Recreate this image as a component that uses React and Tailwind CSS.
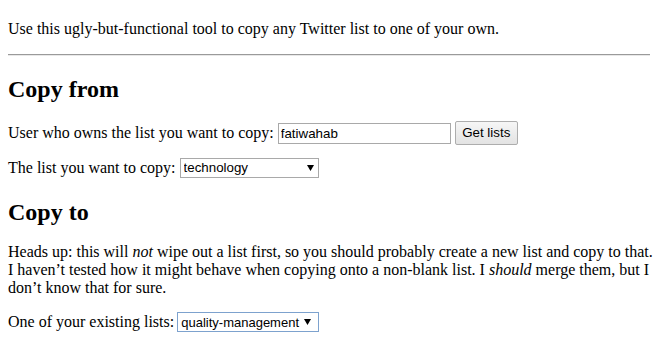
import React from 'react';

function Caret() {
    return (
        <svg width="7" height="6" viewBox="0 0 7 6" className="block">
            <polygon points="0,0 7,0 3.5,6" fill="#000" />
        </svg>
    );
}

function Dropdown({ value, className, caretRight }) {
    return (
        <span className="relative inline-block">
            <select
                defaultValue={value}
                className={`appearance-none block bg-white text-black leading-[15px] pl-[3px] rounded-none outline-none ${className}`}
                style={{ fontFamily: '"Liberation Sans", Arial, sans-serif' }}
            >
                <option value={value}>{value}</option>
            </select>
            <span className={`absolute top-1/2 -translate-y-1/2 ${caretRight}`}>
                <Caret />
            </span>
        </span>
    );
}

export default function App() {
    const sans = { fontFamily: '"Liberation Sans", Arial, sans-serif' };

    return (
        <div
            className="min-h-[340px] bg-white text-black px-2 pt-[20px] text-[16px] leading-[18px]"
            style={{ fontFamily: '"Liberation Serif", "Times New Roman", serif' }}
        >
            <p>Use this ugly-but-functional tool to copy any Twitter list to one of your own.</p>

            <hr className="mt-4 h-0 border-0 border-t border-b border-t-[#9a9a9a] border-b-[#e8e8e8]" />

            <h2 className="mt-[19px] text-2xl font-bold leading-[28px]">Copy from</h2>

            <div className="mt-[18px] h-[24px] flex items-center">
                <span>User who owns the list you want to copy:</span>
                <input
                    type="text"
                    defaultValue="fatiwahab"
                    className="ml-[4px] w-[173px] h-[21px] border border-[#a9a9a9] px-[2px] text-[13.33px] text-black outline-none"
                    style={sans}
                />
                <button
                    className="ml-[4px] w-[63px] h-[24px] border border-[#adadad] rounded-[2px] bg-gradient-to-b from-[#f6f6f6] to-[#e3e3e3] text-[13.33px] text-black"
                    style={sans}
                >
                    Get lists
                </button>
            </div>

            <div className="mt-[12px] h-[21px] flex items-center">
                <span>The list you want to copy:</span>
                <span className="ml-[4px]">
                    <Dropdown
                        value="technology"
                        className="w-[139px] h-[20px] border border-[#a9a9a9] text-[13.33px]"
                        caretRight="right-[5px]"
                    />
                </span>
            </div>

            <h2 className="mt-[20px] text-2xl font-bold leading-[28px]">Copy to</h2>

            <p className="mt-[17px] mr-[-8px]">
                Heads up: this will <em>not</em> wipe out a list first, so you should probably create a new list and copy to that.
                I haven’t tested how it might behave when copying onto a non-blank list. I <em>should</em> merge them, but I
                don’t know that for sure.
            </p>

            <div className="mt-[15px] h-[20px] flex items-center">
                <span>One of your existing lists:</span>
                <span className="ml-[3px]">
                    <Dropdown
                        value="quality-management"
                        className="w-[142px] h-[20px] border border-[#7da2ce] text-[13px]"
                        caretRight="right-[8px]"
                    />
                </span>
            </div>
        </div>
    );
}
